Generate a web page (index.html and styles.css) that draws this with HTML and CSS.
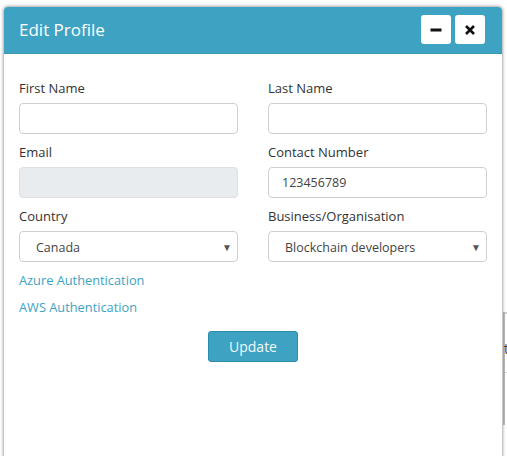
FILE: index.html
```html
<!DOCTYPE html>
<html>
<head>
<meta charset="utf-8">
<link rel="stylesheet" href="styles.css">
</head>
<body>
<div class="page">
  <div class="bg-table">
    <div class="bg-row r1"></div>
    <div class="bg-row r2"><span class="bg-text">t</span></div>
    <div class="bg-row r3"></div>
  </div>
</div>
<div class="dialog">
  <div class="dialog-header">
    <span class="dialog-title">Edit Profile</span>
    <div class="dialog-actions">
      <button class="icon-btn" aria-label="Minimize">
        <svg width="12" height="12" viewBox="0 0 12 12"><rect x="0.5" y="4.5" width="11" height="3" fill="#111"/></svg>
      </button>
      <button class="icon-btn" aria-label="Close">
        <svg width="12" height="12" viewBox="0 0 12 12"><path d="M2 2 L10 10 M10 2 L2 10" stroke="#111" stroke-width="2.6" stroke-linecap="butt"/></svg>
      </button>
    </div>
  </div>
  <div class="dialog-body">
    <div class="grid">
      <div class="field">
        <label class="label">First Name</label>
        <div class="input"></div>
      </div>
      <div class="field">
        <label class="label">Last Name</label>
        <div class="input"></div>
      </div>
      <div class="field">
        <label class="label">Email</label>
        <div class="input disabled"><span class="blur">&nbsp;</span></div>
      </div>
      <div class="field">
        <label class="label">Contact Number</label>
        <div class="input">123456789</div>
      </div>
      <div class="field">
        <label class="label">Country</label>
        <div class="input select"><span>Canada</span><span class="caret">▼</span></div>
      </div>
      <div class="field">
        <label class="label">Business/Organisation</label>
        <div class="input select"><span>Blockchain developers</span><span class="caret">▼</span></div>
      </div>
    </div>
    <div class="links">
      <a class="link">Azure Authentication</a>
      <a class="link">AWS Authentication</a>
    </div>
    <div class="actions">
      <button class="btn-primary">Update</button>
    </div>
  </div>
</div>
</body>
</html>
```
FILE: styles.css
```css
* { box-sizing: border-box; }
html, body { margin: 0; padding: 0; }
body {
  width: 507px;
  height: 456px;
  overflow: hidden;
  background: #ffffff;
  font-family: "Open Sans", "Liberation Sans", sans-serif;
  position: relative;
}
.page {
  padding-left: 503px;
  padding-top: 312px;
}
.bg-table { border-left: 2px solid #bdbdbd; }
.bg-row { border-top: 1px solid #d0d0d0; }
.r1 { height: 0; }
.r2 { height: 59px; position: relative; }
.bg-text {
  position: absolute; left: -1px; top: 26px;
  font-size: 14px; color: #5a3a1a; line-height: 18px;
}
.r3 { height: 53px; }

.dialog {
  position: absolute;
  left: 4px;
  top: 7px;
  width: 498px;
  height: 470px;
  background: #fff;
  border-radius: 4px 4px 0 0;
  box-shadow: 0 0 3px 1px rgba(0,0,0,0.35);
}
.dialog-header {
  height: 47px;
  background: #3ea3c2;
  border-radius: 4px 4px 0 0;
  border-bottom: 1px solid #3a97b3;
  display: flex;
  align-items: center;
  justify-content: space-between;
  padding: 0 17px 0 15px;
}
.dialog-title {
  color: #fff;
  font-size: 17px;
  line-height: 22px;
}
.dialog-actions { display: flex; gap: 4px; margin-top: -1px; }
.icon-btn {
  width: 30px; height: 29px;
  border: none; border-radius: 3px;
  background: #fff;
  padding: 0;
  display: flex; align-items: center; justify-content: center;
}
.dialog-body {
  padding: 24px 15px 0 15px;
}
.grid {
  display: grid;
  grid-template-columns: 219px 219px;
  column-gap: 30px;
  row-gap: 8px;
}
.field { display: flex; flex-direction: column; }
.label {
  font-size: 13px;
  line-height: 20px;
  color: #333;
  margin-bottom: 5px;
}
.input {
  height: 31px;
  border: 1px solid #ccd0d4;
  border-radius: 4px;
  font-size: 12.5px;
  color: #444;
  padding: 0 13px;
  display: flex;
  align-items: center;
}
.input.disabled { background: #e9ecef; border-color: #dde1e5; }
.input.select { padding: 1px 5px 0 16px; justify-content: space-between; }
.caret { font-size: 10px; color: #555; }
.links {
  display: flex; flex-direction: column;
  gap: 7px;
  margin-top: 8px;
}
.link {
  font-size: 12.8px;
  line-height: 20px;
  color: #3ea3c2;
}
.actions {
  display: flex; justify-content: center;
  margin-top: 14px;
}
.btn-primary {
  width: 90px; height: 31px;
  background: #3ea3c2;
  border: 1px solid #2b8cab;
  border-radius: 3px;
  color: #f2f8fa;
  font-family: "Open Sans", "Liberation Sans", sans-serif;
  font-size: 14px;
  padding: 0;
}
```
